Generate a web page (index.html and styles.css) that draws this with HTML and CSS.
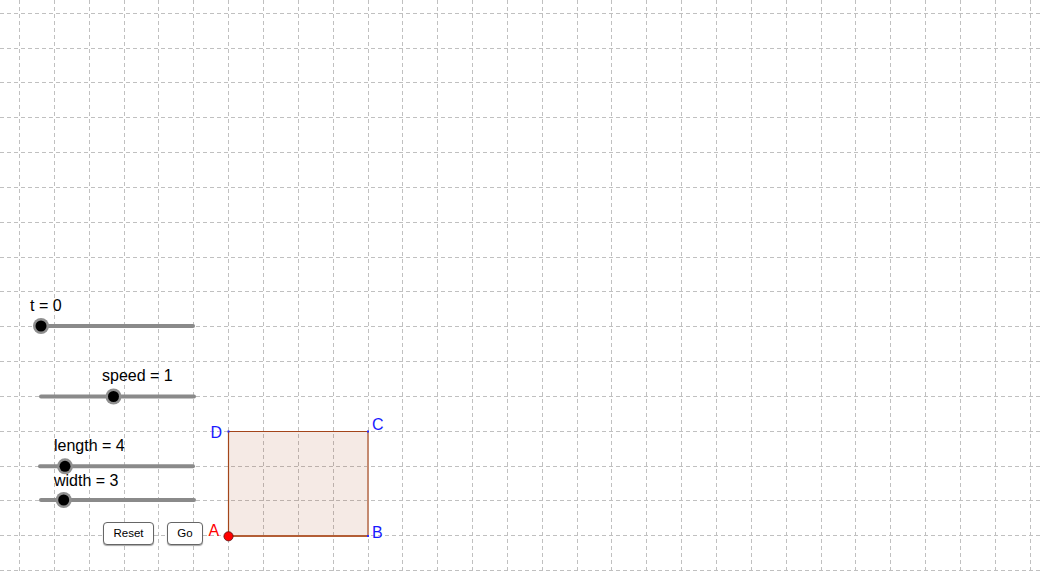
FILE: index.html
```html
<!DOCTYPE html>
<html>
<head>
<meta charset="utf-8">
<link rel="stylesheet" href="styles.css">
</head>
<body>
<div class="applet">
<svg class="board" width="1040" height="574" viewBox="0 0 1040 574" xmlns="http://www.w3.org/2000/svg">
  <g class="grid">
    <line x1="19.5" y1="0" x2="19.5" y2="574"/>
    <line x1="54.5" y1="0" x2="54.5" y2="574"/>
    <line x1="89.5" y1="0" x2="89.5" y2="574"/>
    <line x1="124.5" y1="0" x2="124.5" y2="574"/>
    <line x1="158.5" y1="0" x2="158.5" y2="574"/>
    <line x1="193.5" y1="0" x2="193.5" y2="574"/>
    <line x1="228.5" y1="0" x2="228.5" y2="574"/>
    <line x1="263.5" y1="0" x2="263.5" y2="574"/>
    <line x1="298.5" y1="0" x2="298.5" y2="574"/>
    <line x1="333.5" y1="0" x2="333.5" y2="574"/>
    <line x1="368.5" y1="0" x2="368.5" y2="574"/>
    <line x1="402.5" y1="0" x2="402.5" y2="574"/>
    <line x1="437.5" y1="0" x2="437.5" y2="574"/>
    <line x1="472.5" y1="0" x2="472.5" y2="574"/>
    <line x1="507.5" y1="0" x2="507.5" y2="574"/>
    <line x1="542.5" y1="0" x2="542.5" y2="574"/>
    <line x1="577.5" y1="0" x2="577.5" y2="574"/>
    <line x1="611.5" y1="0" x2="611.5" y2="574"/>
    <line x1="646.5" y1="0" x2="646.5" y2="574"/>
    <line x1="681.5" y1="0" x2="681.5" y2="574"/>
    <line x1="716.5" y1="0" x2="716.5" y2="574"/>
    <line x1="751.5" y1="0" x2="751.5" y2="574"/>
    <line x1="786.5" y1="0" x2="786.5" y2="574"/>
    <line x1="821.5" y1="0" x2="821.5" y2="574"/>
    <line x1="855.5" y1="0" x2="855.5" y2="574"/>
    <line x1="890.5" y1="0" x2="890.5" y2="574"/>
    <line x1="925.5" y1="0" x2="925.5" y2="574"/>
    <line x1="960.5" y1="0" x2="960.5" y2="574"/>
    <line x1="995.5" y1="0" x2="995.5" y2="574"/>
    <line x1="1030.5" y1="0" x2="1030.5" y2="574"/>
    <line x1="0" y1="13.5" x2="1040" y2="13.5"/>
    <line x1="0" y1="48.5" x2="1040" y2="48.5"/>
    <line x1="0" y1="82.5" x2="1040" y2="82.5"/>
    <line x1="0" y1="117.5" x2="1040" y2="117.5"/>
    <line x1="0" y1="152.5" x2="1040" y2="152.5"/>
    <line x1="0" y1="187.5" x2="1040" y2="187.5"/>
    <line x1="0" y1="222.5" x2="1040" y2="222.5"/>
    <line x1="0" y1="257.5" x2="1040" y2="257.5"/>
    <line x1="0" y1="291.5" x2="1040" y2="291.5"/>
    <line x1="0" y1="326.5" x2="1040" y2="326.5"/>
    <line x1="0" y1="361.5" x2="1040" y2="361.5"/>
    <line x1="0" y1="396.5" x2="1040" y2="396.5"/>
    <line x1="0" y1="431.5" x2="1040" y2="431.5"/>
    <line x1="0" y1="466.5" x2="1040" y2="466.5"/>
    <line x1="0" y1="500.5" x2="1040" y2="500.5"/>
    <line x1="0" y1="535.5" x2="1040" y2="535.5"/>
    <line x1="0" y1="570.5" x2="1040" y2="570.5"/>
  </g>

  <!-- rectangle ABCD -->
  <rect class="poly-fill" x="228.5" y="431.5" width="140" height="104.5"/>
  <line class="edge" x1="228.5" y1="431.5" x2="368" y2="431.5"/>
  <line class="edge" x1="228.5" y1="431.5" x2="228.5" y2="536"/>
  <line class="edge-bottom" x1="228.5" y1="536" x2="368" y2="536"/>
  <line class="edge-right" x1="368" y1="431.5" x2="368" y2="536"/>
  <rect class="vertex" x="227.5" y="430.5" width="2" height="2"/>
  <rect class="vertex" x="367" y="430.5" width="2" height="2"/>
  <rect class="vertex" x="367" y="535" width="2" height="2"/>
  <circle class="point-a" cx="228.5" cy="536.3" r="4.6"/>

  <text class="lbl lbl-blue" x="210.5" y="438">D</text>
  <text class="lbl lbl-blue" x="372" y="430">C</text>
  <text class="lbl lbl-blue" x="372" y="538">B</text>
  <text class="lbl lbl-red" x="208.5" y="536">A</text>

  <!-- sliders -->
  <g class="slider">
    <line class="track" x1="41" y1="326" x2="193" y2="326"/>
    <circle class="halo" cx="41" cy="326" r="8"/>
    <circle class="knob" cx="41" cy="326" r="5.5"/>
    <text class="lbl" x="30" y="311">t = 0</text>
  </g>
  <g class="slider">
    <line class="track" x1="41" y1="396.5" x2="194" y2="396.5"/>
    <circle class="halo" cx="113.5" cy="396.5" r="8"/>
    <circle class="knob" cx="113.5" cy="396.5" r="5.5"/>
    <text class="lbl" x="102" y="381">speed = 1</text>
  </g>
  <g class="slider">
    <line class="track" x1="40" y1="466.3" x2="193" y2="466.3"/>
    <circle class="halo" cx="65" cy="466.3" r="8"/>
    <circle class="knob" cx="65" cy="466.3" r="5.5"/>
    <text class="lbl" x="54" y="450.5">length = 4</text>
  </g>
  <g class="slider">
    <line class="track" x1="41" y1="500" x2="194" y2="500"/>
    <circle class="halo" cx="63.7" cy="500" r="8"/>
    <circle class="knob" cx="63.7" cy="500" r="5.5"/>
    <text class="lbl" x="54" y="485.5">width = 3</text>
  </g>
</svg>
<button class="gbtn btn-reset">Reset</button>
<button class="gbtn btn-go">Go</button>
</div>
</body>
</html>
```

FILE: styles.css
```css
html, body {
  margin: 0;
  padding: 0;
  background: #ffffff;
}

.applet {
  position: relative;
  width: 1040px;
  height: 574px;
  overflow: hidden;
  background: #ffffff;
  font-family: "Liberation Sans", Arial, sans-serif;
}

.board {
  position: absolute;
  left: 0;
  top: 0;
  display: block;
}

.grid line {
  stroke: #c0c0c0;
  stroke-width: 1;
  stroke-dasharray: 4 3;
}

.poly-fill {
  fill: #993300;
  fill-opacity: 0.1;
  stroke: none;
}

.edge {
  stroke: #a3451a;
  stroke-width: 1.2;
}

.edge-bottom {
  stroke: #b35e36;
  stroke-width: 2;
}

.edge-right {
  stroke: #c48a70;
  stroke-width: 2;
}

.vertex {
  fill: #2a2aff;
}

.point-a {
  fill: #ff0000;
  stroke: #5a1010;
  stroke-width: 0.8;
}

.lbl {
  font-family: "Liberation Sans", Arial, sans-serif;
  font-size: 16px;
  fill: #000000;
}

.lbl-blue {
  fill: #1a1aff;
}

.lbl-red {
  fill: #ff0000;
}

.track {
  stroke: #8a8a8a;
  stroke-width: 4;
  stroke-linecap: round;
}

.halo {
  fill: #8f8f8f;
}

.knob {
  fill: #000000;
}

.gbtn {
  position: absolute;
  box-sizing: border-box;
  height: 23px;
  padding: 0;
  background: #ffffff;
  border: 1px solid #666666;
  border-radius: 4px;
  box-shadow: 0 1px 1px rgba(0, 0, 0, 0.35);
  font-family: "Liberation Sans", Arial, sans-serif;
  font-size: 11.5px;
  color: #000000;
  line-height: 21px;
  text-align: center;
}

.btn-reset {
  left: 103px;
  top: 522px;
  width: 51px;
}

.btn-go {
  left: 167px;
  top: 522px;
  width: 36px;
}
```
